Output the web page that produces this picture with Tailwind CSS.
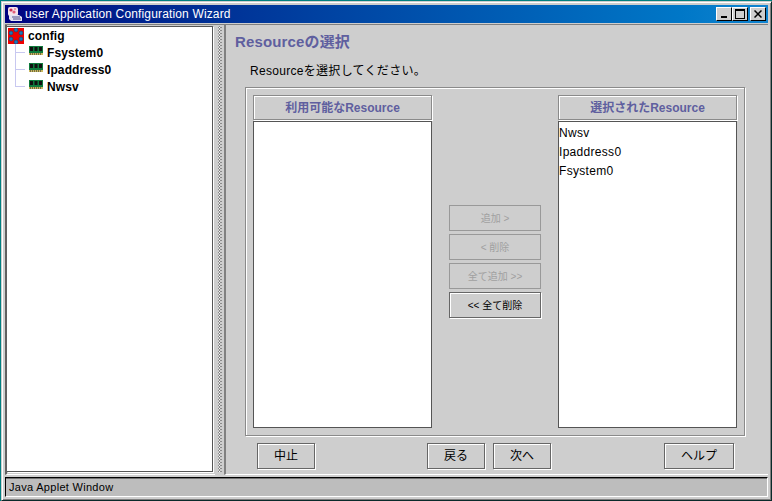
<!DOCTYPE html>
<html lang="ja">
<head>
  <meta charset="UTF-8">
  <title>userApplication Configuration Wizard</title>
  <script src="https://cdn.jsdelivr.net/npm/@tailwindcss/browser@4"></script>
</head>
<body class="bg-[#008080]">
  <div class="w-[772px] h-[501px] overflow-hidden bg-[#008080] pt-[1px] pl-[1px] font-['Liberation_Sans','Noto_Sans_CJK_JP',sans-serif] text-[12px] text-black">
    <!-- window frame -->
    <div class="w-[771px] h-[500px] flex flex-col bg-[#cecece] border-t border-l border-t-[#cecece] border-l-[#cecece] border-r border-b border-r-[#0a2a2a] border-b-[#0a2a2a] shadow-[inset_1px_1px_0_#fff,inset_-1px_-1px_0_#808080] p-[3px]">
      <!-- title bar -->
      <div class="h-[18px] shrink-0 flex items-center pl-[2px] pr-[2px] bg-gradient-to-r from-[#000080] to-[#1084d0]">
        <svg class="w-[16px] h-[16px] shrink-0" viewBox="0 0 16 16">
          <rect x="1" y="1" width="10" height="9" rx="2" fill="#f4e4ea"/>
          <circle cx="4" cy="4" r="1.6" fill="#d03050"/>
          <circle cx="7" cy="6" r="1.6" fill="#e0607a"/>
          <circle cx="8" cy="3" r="1" fill="#e88aa0"/>
          <path d="M2 9h10l3 2v4H4l-2-2z" fill="#e4e4f0"/>
          <path d="M5 11h8M6 13h8" stroke="#50508a"/>
        </svg>
        <span class="ml-[2px] text-white text-[12px] leading-none tracking-[0.15px] whitespace-nowrap">user Application Configuration Wizard</span>
        <div class="ml-auto flex">
          <div class="w-[16px] h-[14px] bg-[#cecece] border border-t-white border-l-white border-r-black border-b-black flex items-end justify-center pb-[2px]">
            <div class="w-[6px] h-[2px] bg-black"></div>
          </div>
          <div class="w-[16px] h-[14px] bg-[#cecece] border border-t-white border-l-white border-r-black border-b-black flex items-center justify-center">
            <div class="w-[10px] h-[10px] border border-black border-t-2"></div>
          </div>
          <div class="ml-[2px] w-[16px] h-[14px] bg-[#cecece] border border-t-white border-l-white border-r-black border-b-black flex items-center justify-center">
            <svg class="w-[8px] h-[8px]" viewBox="0 0 8 8"><path d="M0.5 0.5l7 7M7.5 0.5l-7 7" stroke="#000" stroke-width="1.5"/></svg>
          </div>
        </div>
      </div>

      <!-- main area -->
      <div class="flex-1 min-h-0 flex mt-[1px] border-t border-[#808080]">
        <!-- tree -->
        <div class="w-[210px] shrink-0 pt-[1px] pr-[2px] pb-[2px] border-l-2 border-[#606060] border-b border-b-[#fff]">
          <div class="h-full bg-white border-t border-r border-b border-[#555] shadow-[1px_1px_0_#fff] pl-[1px]">
            <div class="flex items-center h-[17px]">
              <svg class="w-[16px] h-[16px] shrink-0" viewBox="0 0 16 16">
                <rect width="16" height="16" fill="#f00000"/>
                <g fill="#1878b8" stroke="#0a3a6a" stroke-width="0.5">
                  <circle cx="8" cy="2" r="2"/><circle cx="13" cy="5" r="2"/><circle cx="13" cy="11" r="2"/><circle cx="8" cy="14" r="2"/><circle cx="3" cy="11" r="2"/><circle cx="3" cy="5" r="2"/>
                </g>
              </svg>
              <span class="ml-[4px] font-bold text-[12px] leading-none tracking-[0.1px]">config</span>
            </div>
            <div class="relative">
              <div class="absolute left-[7px] top-0 w-px h-[43px] bg-[#c8c8f0]"></div>
              <div class="flex items-center h-[17px] pl-[7px]">
                <div class="w-[10px] h-px bg-[#c8c8f0] shrink-0"></div>
                <svg class="ml-[4px] w-[14px] h-[9px] shrink-0 -translate-y-[2px]" viewBox="0 0 14 9"><rect y="0" width="14" height="7" fill="#0f7a3c"/><path d="M1 1h3v4H1zM5.5 1h3v4h-3zM10 1h3v4h-3z" fill="#111"/><path d="M0 7h14v2H0z" fill="#c8b860"/><path d="M1 8h1M3 8h1M5 8h1M7 8h1M9 8h1M11 8h1" stroke="#222"/></svg>
                <span class="ml-[4px] font-bold text-[12px] leading-none tracking-[0.1px]">Fsystem0</span>
              </div>
              <div class="flex items-center h-[17px] pl-[7px]">
                <div class="w-[10px] h-px bg-[#c8c8f0] shrink-0"></div>
                <svg class="ml-[4px] w-[14px] h-[9px] shrink-0 -translate-y-[2px]" viewBox="0 0 14 9"><rect y="0" width="14" height="7" fill="#0f7a3c"/><path d="M1 1h3v4H1zM5.5 1h3v4h-3zM10 1h3v4h-3z" fill="#111"/><path d="M0 7h14v2H0z" fill="#c8b860"/><path d="M1 8h1M3 8h1M5 8h1M7 8h1M9 8h1M11 8h1" stroke="#222"/></svg>
                <span class="ml-[4px] font-bold text-[12px] leading-none tracking-[0.1px]">Ipaddress0</span>
              </div>
              <div class="flex items-center h-[17px] pl-[7px]">
                <div class="w-[10px] h-px bg-[#c8c8f0] shrink-0"></div>
                <svg class="ml-[4px] w-[14px] h-[9px] shrink-0 -translate-y-[2px]" viewBox="0 0 14 9"><rect y="0" width="14" height="7" fill="#0f7a3c"/><path d="M1 1h3v4H1zM5.5 1h3v4h-3zM10 1h3v4h-3z" fill="#111"/><path d="M0 7h14v2H0z" fill="#c8b860"/><path d="M1 8h1M3 8h1M5 8h1M7 8h1M9 8h1M11 8h1" stroke="#222"/></svg>
                <span class="ml-[4px] font-bold text-[12px] leading-none tracking-[0.1px]">Nwsv</span>
              </div>
            </div>
          </div>
        </div>

        <!-- splitter -->
        <div class="w-[9px] shrink-0 flex justify-center bg-[#cecece]">
          <div class="w-[4px] bg-[radial-gradient(circle,#ffffff_35%,#8a8a8a_36%,#8a8a8a_55%,transparent_56%)] bg-[length:3px_3px] mt-[1px] mb-[3px]"></div>
        </div>

        <!-- wizard panel -->
        <div class="flex-1 min-w-0 flex flex-col border-l-2 border-[#808080] border-b border-b-white pl-[9px] pr-[23px]">
          <h1 class="mt-[8px] h-[18px] leading-[18px] text-[15px] font-bold text-[#5f5f9f] tracking-[0.15px]">Resourceの選択</h1>
          <p class="mt-[12px] ml-[15px] h-[16px] leading-[16px] text-[12px] tracking-[0.3px]">Resourceを選択してください。</p>

          <!-- group box -->
          <div class="mt-[8px] ml-[10px] h-[349px] flex justify-between p-[7px] border border-[#8a8a8a] shadow-[inset_1px_1px_0_#fff,1px_1px_0_#fff]">
            <div class="w-[179px] flex flex-col">
              <div class="h-[25px] shrink-0 flex items-center justify-center pt-[1px] border border-[#8a8a8a] shadow-[inset_1px_1px_0_#fff,1px_1px_0_#fff] text-[12px] font-bold text-[#5f5f9f]">利用可能なResource</div>
              <div class="flex-1 mt-[1px] bg-white border border-[#555]"></div>
            </div>

            <div class="w-[92px] flex flex-col gap-[3px] pt-[110px]">
              <button class="h-[26px] flex items-center justify-center border border-[#999] text-[10px] text-[#a0a0a0]">追加 &gt;</button>
              <button class="h-[26px] flex items-center justify-center border border-[#999] text-[10px] text-[#a0a0a0]">&lt; 削除</button>
              <button class="h-[26px] flex items-center justify-center border border-[#999] text-[10px] text-[#a0a0a0]">全て追加 &gt;&gt;</button>
              <button class="h-[26px] flex items-center justify-center border border-[#666] shadow-[inset_1px_1px_0_#fff,1px_1px_0_#fff] text-[10px]">&lt;&lt; 全て削除</button>
            </div>

            <div class="w-[179px] flex flex-col">
              <div class="h-[25px] shrink-0 flex items-center justify-center pt-[1px] border border-[#8a8a8a] shadow-[inset_1px_1px_0_#fff,1px_1px_0_#fff] text-[12px] font-bold text-[#5f5f9f]">選択されたResource</div>
              <ul class="flex-1 mt-[1px] bg-white border border-[#555] pt-[2px] text-[12px] tracking-[0.3px]">
                <li class="h-[19px] leading-[19px]">Nwsv</li>
                <li class="h-[19px] leading-[19px]">Ipaddress0</li>
                <li class="h-[19px] leading-[19px]">Fsystem0</li>
              </ul>
            </div>
          </div>

          <!-- wizard buttons -->
          <div class="mt-[7px] ml-[22px] flex">
            <button class="w-[58px] h-[26px] border border-[#666] shadow-[inset_1px_1px_0_#fff,1px_1px_0_#fff] text-[12px]">中止</button>
            <button class="ml-[112px] w-[58px] h-[26px] border border-[#666] shadow-[inset_1px_1px_0_#fff,1px_1px_0_#fff] text-[12px]">戻る</button>
            <button class="ml-[8px] w-[58px] h-[26px] border border-[#666] shadow-[inset_1px_1px_0_#fff,1px_1px_0_#fff] text-[12px]">次へ</button>
            <button class="ml-[113px] w-[70px] h-[26px] border border-[#666] shadow-[inset_1px_1px_0_#fff,1px_1px_0_#fff] text-[12px]">ヘルプ</button>
          </div>
        </div>
      </div>

      <!-- status bar -->
      <div class="mt-[2px] h-[20px] shrink-0 flex items-center pl-[3px] bg-[#bdbdbd] border-t border-l border-t-black border-l-black border-b border-r border-b-white border-r-white shadow-[inset_0_1px_0_#707070] text-[11px] tracking-[0.3px]">Java Applet Window</div>
    </div>
  </div>
</body>
</html>
